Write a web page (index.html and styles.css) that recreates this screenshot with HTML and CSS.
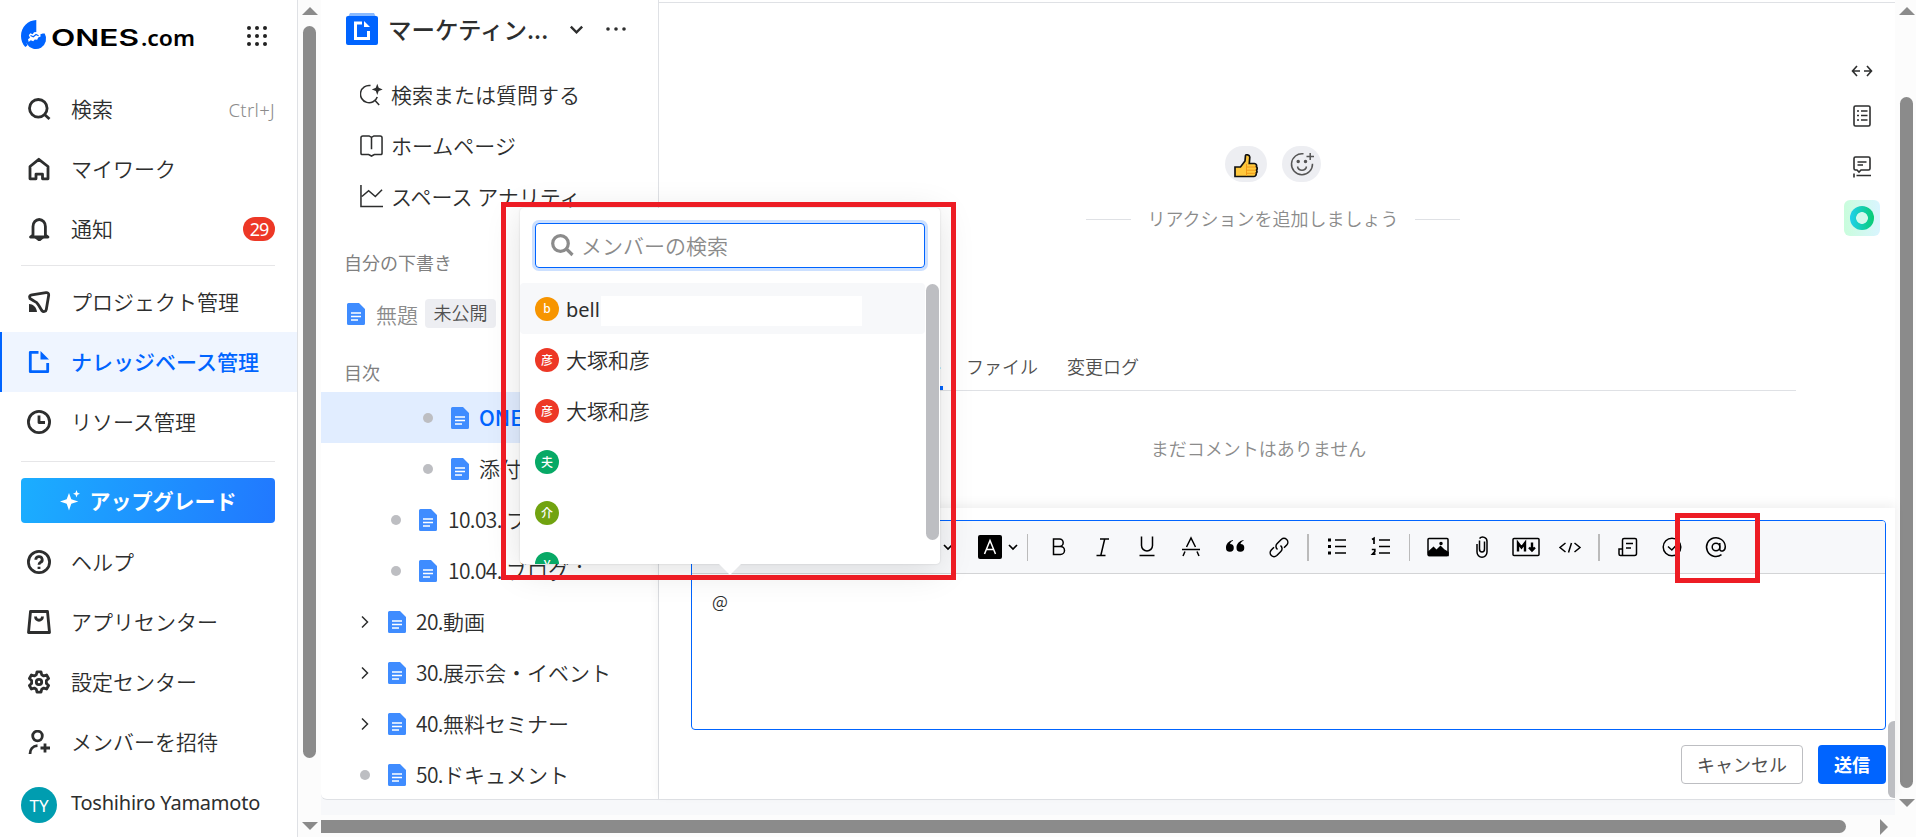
FILE: index.html
```html
<!DOCTYPE html>
<html lang="ja">
<head>
  <meta charset="UTF-8" />
  <meta name="viewport" content="width=device-width, initial-scale=1.0"/>
  <title>ONES.com - ナレッジベース管理</title>
  <link rel="stylesheet" href="styles.css">
</head>
<body>
  <svg class="defs" width="0" height="0">
    <symbol id="doc" viewBox="0 0 18 22">
      <path d="M1.500 0H12l6 6v14.500a1.500 1.500 0 0 1-1.500 1.500h-15A1.500 1.500 0 0 1 0 20.500v-19A1.500 1.500 0 0 1 1.500 0z" fill="#3f8cff"/>
      <path d="M4 10h10M4 13.500h10M4 17h7" stroke="#fff" stroke-width="1.500"/>
    </symbol>
    <symbol id="chev" viewBox="0 0 12 12">
      <path d="M2 4l4 4 4-4" fill="none" stroke="currentColor" stroke-width="1.700"/>
    </symbol>
    <symbol id="right" viewBox="0 0 10 14">
      <path d="M2 1.500L7.500 7 2 12.500" fill="none" stroke="currentColor" stroke-width="1.500"/>
    </symbol>
  </svg>

  <div class="app">
    <nav class="sidebar">
      <div class="brand">
        <svg width="176" height="34" viewBox="0 0 176 34">
          <path d="M15.300 1v12l-2.300.3-1.300 1.900-2.400-.9-1.500 2 1.200 2.400-2 1.500.6 2.200-2 1.600.7 2.600-2 1.500C1.500 25.200 0 21.200 0 17 0 8 7 1.200 15.300 1z" fill="#0064ff"/>
          <path d="M23.700 14.500A9.800 9.800 0 1 1 5.900 25l-.5-1.800 2.800-.8 1.600-1.200 2.400 1 1.600-1.600 2.400.2 1-2.200 2.400-1-.2-2.300 2.400-.8z" fill="#0064ff"/>
          <path d="M9.500 16.500l2.800 1.300 2.700-2.300 2.600 1.200" fill="none" stroke="#0064ff" stroke-width="1.200"/>
          <text class="logo-word" x="30" y="27" textLength="88" lengthAdjust="spacingAndGlyphs">ONES</text>
          <text class="logo-com" x="120" y="27" textLength="54" lengthAdjust="spacingAndGlyphs">.com</text>
        </svg>
        <svg class="apps" width="20" height="20" viewBox="0 0 20 20" fill="#222">
          <circle cx="2" cy="2" r="2"/><circle cx="10" cy="2" r="2"/><circle cx="18" cy="2" r="2"/>
          <circle cx="2" cy="10" r="2"/><circle cx="10" cy="10" r="2"/><circle cx="18" cy="10" r="2"/>
          <circle cx="2" cy="18" r="2"/><circle cx="10" cy="18" r="2"/><circle cx="18" cy="18" r="2"/>
        </svg>
      </div>

      <div class="nav-group">
        <div class="nav-item">
          <svg class="ico" viewBox="0 0 24 24"><circle cx="11.300" cy="11.300" r="8.800"/><path d="M17.500 17.500l5 4.500"/></svg>
          <span>検索</span><span class="shortcut">Ctrl+J</span>
        </div>
        <div class="nav-item">
          <svg class="ico" viewBox="0 0 24 24"><path d="M3 9.500L11.800 2.300l9.200 7.200v12.300h-5.500v-4.600h-6.500v4.600H3z"/></svg>
          <span>マイワーク</span>
        </div>
        <div class="nav-item">
          <svg class="ico" viewBox="0 0 24 24"><path d="M6 18v-8.500a6.200 7 0 0 1 12.400 0V18l2.600 2H3.500z"/><path d="M9 20.500h6.500l-3.200 2.500z" fill="#2d2e2e"/></svg>
          <span>通知</span><span class="count">29</span>
        </div>
      </div>
      <div class="rule"></div>
      <div class="nav-group">
        <div class="nav-item">
          <svg class="ico" viewBox="0 0 24 24"><path d="M3 8.500c-1.200-2.300.2-3.300 2-3.600L19 2.700c1.800-.2 3 .8 2.700 2.600l-2.400 14.200c-.4 2.300-3 2.700-4.500 1L11.500 15c-1.300-2.300-2-3-4.500-4z"/><path d="M2 14c4 0 7.500 3 8 8H2z" fill="#2d2e2e" stroke="none"/></svg>
          <span>プロジェクト管理</span>
        </div>
        <div class="nav-item active">
          <svg class="ico" viewBox="0 0 24 24"><path d="M11.500 2.300H3.300v19.400h17.400V13"/><path d="M13.500 1l8.500 8.500h-8.500z" fill="#0064ff" stroke="none"/></svg>
          <span>ナレッジベース管理</span>
        </div>
        <div class="nav-item">
          <svg class="ico" viewBox="0 0 24 24"><circle cx="12" cy="12" r="10.600"/><path d="M12 5.500v7h6"/></svg>
          <span>リソース管理</span>
        </div>
      </div>
      <div class="rule second"></div>
      <button class="upgrade">
        <svg width="20" height="21" viewBox="0 0 20 21" fill="#fff"><path d="M9 3l2.300 6.300 7 2.200-7 2.300L9 20.500l-2.300-6.700L0 11.500l6.700-2.200z"/><path d="M16.500 0l1 2.700 2.500 1-2.500 1-1 2.800-1-2.800-2.500-1 2.500-1z"/></svg>
        <span>アップグレード</span>
      </button>
      <div class="nav-group">
        <div class="nav-item">
          <svg class="ico" viewBox="0 0 24 24"><circle cx="12" cy="12" r="10.600"/><path d="M8.800 9.700a3.200 3 0 1 1 4.500 2.700c-1 .5-1.300.9-1.300 2.300M12 16.700v2.300"/></svg>
          <span>ヘルプ</span>
        </div>
        <div class="nav-item">
          <svg class="ico" viewBox="0 0 24 24"><path d="M3.500 1.500h17l2 21h-21z"/><path d="M8.500 6.500c0 5 7 5 7 0"/></svg>
          <span>アプリセンター</span>
        </div>
        <div class="nav-item">
          <svg class="ico" viewBox="0 0 24 24"><path d="M10 1.800h4l.7 3 2 1.100 2.900-.9 2 3.500-2.200 2.100v2.800l2.200 2.100-2 3.500-2.900-.9-2 1.100-.7 3h-4l-.7-3-2-1.100-2.900.9-2-3.500 2.200-2.100v-2.800L2.400 8.500l2-3.500 2.900.9 2-1.100z"/><circle cx="12" cy="12" r="2.700"/></svg>
          <span>設定センター</span>
        </div>
        <div class="nav-item">
          <svg class="ico" viewBox="0 0 24 24"><circle cx="10.500" cy="6" r="4.800"/><path d="M3 24c0-4 2.500-8 7.500-8.300M18 13.500v9M13.500 18H23"/></svg>
          <span>メンバーを招待</span>
        </div>
        <div class="nav-item user">
          <span class="user-avatar">TY</span>
          <span class="user-name">Toshihiro Yamamoto</span>
        </div>
      </div>
    </nav>

    <div class="vscroll left">
      <span class="arrow up"></span><span class="thumb"></span><span class="arrow down"></span>
    </div>

    <div class="frame">
      <div class="workspace">
        <aside class="tree">
          <div class="space-head">
            <svg width="32" height="32" viewBox="0 0 32 32"><path d="M4 0h24l2 4H2z" fill="#8abaff"/><rect y="3" width="32" height="29" rx="2" fill="#0064ff"/><path d="M16 10H9.500v15.500h13V18" fill="none" stroke="#fff" stroke-width="3"/><path d="M18 8l6 6h-6z" fill="#fff"/></svg>
            <span class="space-name">マーケティン...</span>
            <svg class="space-chev" width="17" height="17"><use href="#chev"/></svg>
            <svg width="20" height="4" viewBox="0 0 20 4" fill="#2d2e2e"><circle cx="2" cy="2" r="1.800"/><circle cx="10" cy="2" r="1.800"/><circle cx="18" cy="2" r="1.800"/></svg>
          </div>
          <div class="tree-link">
            <svg class="thin" viewBox="0 0 24 24"><path d="M11 2.700a9 9 0 1 0 7 11.800M15.500 18l4.500 5"/><path d="M18 .8l1.500 4.200 4.200 1.700-4.200 1.700L18 12.600l-1.500-4.200-4.200-1.700L16.500 5z" fill="#2d2e2e" stroke="none"/></svg>
            <span>検索または質問する</span>
          </div>
          <div class="tree-link">
            <svg class="thin" viewBox="0 0 24 24"><path d="M3 2h6.500l2.500 1.500L14.500 2H21q2 0 2 2v16q0 1.500-2 1.500h-6l-3 1.500-3-1.500H3q-2 0-2-1.500V4q0-2 2-2zM12 3.500V16"/></svg>
            <span>ホームページ</span>
          </div>
          <div class="tree-link">
            <svg class="thin" viewBox="0 0 24 24"><path d="M1 0v22.500h23M2 12l7-6 7 6 7-7"/></svg>
            <span>スペース アナリティ</span>
          </div>
          <div class="tree-label">自分の下書き</div>
          <div class="draft">
            <svg class="doc"><use href="#doc"/></svg>
            <span>無題</span>
            <span class="tag">未公開</span>
          </div>
          <div class="tree-label toc">目次</div>
          <div class="node lv3 current"><i class="dot"></i><svg class="doc"><use href="#doc"/></svg><span>ONES</span></div>
          <div class="node lv3"><i class="dot"></i><svg class="doc"><use href="#doc"/></svg><span>添付</span></div>
          <div class="node lv2"><i class="dot"></i><svg class="doc"><use href="#doc"/></svg><span class="num">10.03. </span><span>ブログ</span></div>
          <div class="node lv2"><i class="dot"></i><svg class="doc"><use href="#doc"/></svg><span class="num">10.04. </span><span>ブログ：</span></div>
          <div class="node"><svg class="exp"><use href="#right"/></svg><svg class="doc"><use href="#doc"/></svg><span class="num">20.</span><span>動画</span></div>
          <div class="node"><svg class="exp"><use href="#right"/></svg><svg class="doc"><use href="#doc"/></svg><span class="num">30.</span><span>展示会・イベント</span></div>
          <div class="node"><svg class="exp"><use href="#right"/></svg><svg class="doc"><use href="#doc"/></svg><span class="num">40.</span><span>無料セミナー</span></div>
          <div class="node"><i class="dot"></i><svg class="doc"><use href="#doc"/></svg><span class="num">50.</span><span>ドキュメント</span></div>
        </aside>

        <main class="page">
          <div class="reactions">
            <span class="pill like">
              <svg width="24" height="24" viewBox="0 0 24 24"><path d="M1 13h5.500L11 7l.5-5.500c.5-1.300 4-1 4.300 1.500L15.300 9.500h5c2 .3 2.700 1.700 2 3.200 1 1 1 2.500.2 3.400.7 1.200.4 2.500-.4 3.100.3 1.600-.4 3.300-2 3.300H1z" fill="#ffc83d" stroke="#111" stroke-width="1.700"/><path d="M12.500 10v12M12.500 13h9M12.500 16.200h9M12.500 19.300h9" stroke="#f09a1a" stroke-width="1" fill="none"/></svg>
            </span>
            <span class="pill add">
              <svg width="24" height="24" viewBox="0 0 24 24" fill="none" stroke="#555" stroke-width="1.500"><path d="M13.500 1.800a10.500 10.500 0 1 0 9 10M16.500 4.500h7.500M20.200 1v7M7.500 14.500c1 5 8 5 9 0"/><circle cx="8.200" cy="9.500" r="1" fill="#555"/><circle cx="15.500" cy="9.500" r="1" fill="#555"/></svg>
            </span>
          </div>
          <div class="reaction-hint"><span>リアクションを追加しましょう</span></div>
          <div class="tabs">
            <span class="tab on">コメント</span>
            <span class="tab">ファイル</span>
            <span class="tab">変更ログ</span>
          </div>
          <div class="empty">まだコメントはありません</div>

          <div class="composer">
            <div class="editor">
              <div class="toolbar">
                <span class="more">.</span>
                <svg class="mini" width="12" height="12"><use href="#chev"/></svg>
                <svg width="24" height="24" viewBox="0 0 24 24"><rect width="24" height="24" rx="2"/><path d="M6.500 19L12 5.500 17.500 19M8.500 14.500h7" fill="none" stroke="#fff" stroke-width="1.500"/></svg>
                <svg class="mini" width="12" height="12"><use href="#chev"/></svg>
                <i class="sep first"></i>
                <span class="tool"><svg viewBox="0 0 24 24"><path d="M6.500 4h6a3.700 3.700 0 0 1 0 7.400h-6zM6.500 11.400h7a4 4 0 0 1 0 8h-7z"/></svg></span>
                <span class="tool"><svg viewBox="0 0 24 24"><path d="M9 4h9M5.500 20.500h9M13.700 4L9.800 20.500"/></svg></span>
                <span class="tool"><svg viewBox="0 0 24 24"><path d="M6.500 1.500v9a5.500 5.500 0 0 0 11 0v-9M4.500 20.500h15"/></svg></span>
                <span class="tool"><svg viewBox="0 0 24 24"><path d="M7.500 12L12 3l4.500 9M3 14.500h18M6 16.500L4 21M18 16.500l2 4.500"/></svg></span>
                <span class="tool"><svg viewBox="0 0 24 24"><path d="M10 5C5.500 6 3 9 3 12.700A3.900 3.900 0 1 0 7 9c.3-1.500 1.500-2.500 3-3.200zM20.500 5c-4.500 1-7 4-7 7.700a3.900 3.900 0 1 0 4-3.700c.3-1.500 1.500-2.500 3-3.200z" fill="#000" stroke="none"/></svg></span>
                <span class="tool"><svg viewBox="0 0 24 24"><path d="M10.500 14.500c-2-1.700-2-4.300-.3-6l4-4c1.700-1.500 4-1.400 5.500 0s1.500 3.800 0 5.500l-2.700 2.700M13.500 10.500c2 1.700 2 4.300.3 6l-4 4c-1.700 1.500-4 1.400-5.500 0s-1.500-3.800 0-5.500L7 12.300"/></svg></span>
                <i class="sep wide"></i>
                <span class="tool"><svg viewBox="0 0 24 24"><path d="M10 5h11M10 11.500h11M10 18h11"/><path d="M3 3.500h3v3H3zM3 10h3v3H3zM3 16.500h3v3H3z" fill="#000" stroke="none"/></svg></span>
                <span class="tool"><svg viewBox="0 0 24 24"><path d="M10 5h11M10 11.500h11M10 18h11"/><path d="M3 4.500l2-1.200V9M2.800 14.500h3v2.200L3.500 19.200H6.500" stroke-width="1.700"/></svg></span>
                <i class="sep"></i>
                <span class="tool"><svg viewBox="0 0 24 24"><rect x="2" y="3.500" width="20" height="17" rx="1"/><path d="M2.500 17l5-4.500 3 3 4-4 3 3 4.500 3v3h-19z" fill="#000"/><circle cx="15" cy="8.500" r="1" fill="#000"/></svg></span>
                <span class="tool"><svg viewBox="0 0 24 24"><path d="M9.500 5.500V14q0 3 2.500 3t2.500-3V6.500M7 9v8a5 5.300 0 0 0 10 0V6.500a4.300 4.300 0 0 0-7.500-3"/></svg></span>
                <span class="tool md"><svg width="28" height="24" viewBox="0 0 28 24"><rect x="1" y="3.500" width="26" height="17" rx="1"/><path d="M6 16.500V8l3.500 4.500L13 8v8.500M20 7.500v7M17 12.500l3 3 3-3" stroke-width="2.400"/></svg></span>
                <span class="tool"><svg viewBox="0 0 24 24"><path d="M7.500 8L2 12.500 7.500 17M16.500 8l5.500 4.500-5.500 4.500M13.500 8l-3 9.500"/></svg></span>
                <i class="sep wide"></i>
                <span class="tool"><svg viewBox="0 0 24 24"><path d="M6.500 20.500V5q0-1.500 1.500-1.500h11q1.500 0 1.500 1.500v13.500q0 2-2 2h-14q-1.500 0-1.500-1.500v-5h3.500M10 8.500h7M10 13h5"/></svg></span>
                <span class="tool"><svg viewBox="0 0 24 24"><circle cx="12" cy="12" r="8.800"/><path d="M8 11.500l3.800 3.500 5.700-6"/></svg></span>
                <span class="tool"><svg viewBox="0 0 24 24"><circle cx="12" cy="12" r="3.800"/><path d="M15.800 8v6.500c.5 2.500 5.500 2.500 5.500-3A9.400 9.400 0 1 0 17.500 19.700"/></svg></span>
              </div>
              <div class="editor-body">@</div>
            </div>
            <div class="actions">
              <button class="btn">キャンセル</button>
              <button class="btn primary">送信</button>
            </div>
          </div>

          <div class="side-tools">
            <svg width="22" height="12" viewBox="0 0 22 12"><path d="M6 1L1.500 6 6 11M1.500 6H9M16 1l4.500 5L16 11M20.500 6H13"/></svg>
            <svg width="18" height="22" viewBox="0 0 18 22"><rect x="1" y="1" width="16" height="20" rx="1.500"/><path d="M4 6h2M8 6h6.500M4 10.500h2M8 10.500h6.500M4 15h2M8 15h6.500"/></svg>
            <svg width="18" height="22" viewBox="0 0 18 22"><path d="M2.500 1h13Q17 1 17 2.500v10q0 1.500-1.500 1.500H8l-2 2-2-2H2.500Q1 14 1 12.500v-10Q1 1 2.500 1zM4.500 6h9M4.500 9h5.500M1 17.500v4M3.500 19.500H18"/></svg>
            <span class="assistant"><i></i></span>
          </div>
          <div class="inner-thumb"></div>
        </main>
      </div>
      <div class="hscroll"><span class="hthumb"></span><span class="arrow next"></span></div>
    </div>

    <div class="vscroll outer">
      <span class="arrow up"></span><span class="thumb"></span><span class="arrow down"></span>
    </div>
  </div>

  <!-- member mention popup -->
  <div class="mention">
    <div class="mention-search">
      <svg width="23" height="23" viewBox="0 0 23 23" fill="none" stroke="#8b8b8b" stroke-width="3.200"><circle cx="9.500" cy="9.500" r="7.800"/><path d="M15.500 15l6 6"/></svg>
      <span>メンバーの検索</span>
    </div>
    <div class="mention-list">
      <div class="member hover"><span class="avatar orange">b</span>bell<span class="blank"></span></div>
      <div class="member"><span class="avatar red">彦</span><span>大塚和彦</span></div>
      <div class="member"><span class="avatar red">彦</span><span>大塚和彦</span></div>
      <div class="member"><span class="avatar green">夫</span></div>
      <div class="member"><span class="avatar olive">介</span></div>
      <div class="member"><span class="avatar green">Y</span></div>
      <span class="list-thumb"></span>
    </div>
  </div>
  <div class="mention-tip"></div>
  <div class="mark mark-popup"></div>
  <div class="mark mark-at"></div>
</body>
</html>
```
FILE: styles.css
```css
:root {
  --primary: #0064ff;
  --text: #2d2e2e;
  --muted: #8b8b8b;
  --line: #dfe1e5;
  --bar: #8b8b8b;
}

* {
  box-sizing: border-box;
}

body {
  margin: 0;
  height: 837px;
  overflow: hidden;
  position: relative;
  font-family: "Noto Sans CJK JP", "Noto Sans", sans-serif;
  font-weight: 350;
  font-size: 21px;
  color: var(--text);
  background: #fff;
}

button {
  font-family: inherit;
}

.defs {
  position: absolute;
}

.app {
  display: flex;
  height: 837px;
  white-space: nowrap;
}

/* left navigation */
.sidebar {
  width: 298px;
  flex: none;
  border-right: 1px solid var(--line);
}

.brand {
  height: 79px;
  padding: 19px 30px 0 21px;
  display: flex;
  justify-content: space-between;
}

.apps {
  margin-top: 7px;
}

.logo-word {
  font: 600 23px Inter, sans-serif;
}

.logo-com {
  font: 600 21px "Noto Sans", sans-serif;
}

.nav-item {
  height: 60px;
  padding: 0 22px 0 27px;
  display: flex;
  align-items: center;
}

.nav-item > span:not([class]),
.tree-link span,
.mention-search span,
.member > span:not([class]),
.reaction-hint span {
  padding-bottom: 2px;
}

.nav-item.active {
  background: #eff5ff;
  border-left: 2px solid var(--primary);
  padding-left: 25px;
  color: var(--primary);
  font-weight: 500;
}

.ico {
  width: 24px;
  height: 24px;
  margin-right: 20px;
  flex: none;
  fill: none;
  stroke: var(--text);
  stroke-width: 2.800;
  stroke-linejoin: round;
}

.active .ico {
  stroke: var(--primary);
}

.shortcut {
  margin-left: auto;
  font: 300 18.500px "Noto Sans", sans-serif;
  letter-spacing: 0.300px;
  color: var(--muted);
}

.count {
  margin-left: auto;
  width: 32px;
  height: 24px;
  border-radius: 12px;
  background: #ed3826;
  color: #fff;
  font: 400 18px/24px "Noto Sans", sans-serif;
  letter-spacing: -1px;
  text-align: center;
}

.rule {
  height: 1px;
  margin: 6px 22px 6px 21px;
  background: #e6e6e8;
}

.rule.second {
  margin: 9px 22px 16px 21px;
}

.upgrade {
  display: flex;
  align-items: center;
  justify-content: center;
  gap: 10px;
  width: 254px;
  height: 45px;
  margin: 0 0 9px 21px;
  border: 0;
  border-radius: 4px;
  background: linear-gradient(100deg, #1baeff, #2178ff);
  color: #fff;
  font-size: 21px;
  font-weight: 700;
}

.upgrade span {
  padding-bottom: 2px;
}

.nav-item.user {
  height: 65px;
  padding-left: 21px;
}

.user-avatar {
  width: 36px;
  height: 36px;
  margin-right: 14px;
  border-radius: 50%;
  background: #009db0;
  color: #fff;
  font: 400 17px/37px "Noto Sans", sans-serif;
  text-align: center;
}

.user-name {
  font-family: "Noto Sans", sans-serif;
  font-weight: 400;
  font-size: 20px;
  letter-spacing: -0.230px;
  padding-bottom: 4px;
}

/* scrollbars */
.vscroll {
  flex: none;
  display: flex;
  flex-direction: column;
  align-items: center;
  background: #fcfcfc;
}

.vscroll.left {
  width: 23px;
  padding: 7px 0 0;
}

.vscroll.outer {
  width: 21px;
  padding: 7px 0 0 2px;
}

.thumb {
  width: 13px;
  border-radius: 7px;
  background: var(--bar);
}

.left .thumb {
  height: 732px;
  margin: 11px 0 64px;
}

.outer .thumb {
  height: 691px;
  margin: 82px 0 11px;
}

.arrow {
  width: 0;
  height: 0;
  border: 8px solid transparent;
}

.arrow.up {
  border-top: 0;
  border-bottom-color: var(--bar);
}

.arrow.down {
  border-bottom: 0;
  border-top-color: var(--bar);
}

.arrow.next {
  border-right: 0;
  border-left-color: var(--bar);
}

.hscroll {
  height: 22px;
  background: #fcfcfc;
  display: flex;
  align-items: center;
  justify-content: space-between;
  padding: 1px 7px 0 0;
}

.hthumb {
  width: 1525px;
  height: 13px;
  border-radius: 0 7px 7px 0;
  background: var(--bar);
}

/* workspace */
.frame {
  flex: 1;
  min-width: 0;
  background: #f7f8fa;
}

.workspace {
  display: flex;
  height: 800px;
  margin-bottom: 15px;
  background: #fff;
  border-bottom: 1px solid var(--line);
  border-bottom-left-radius: 6px;
}

.tree {
  width: 338px;
  flex: none;
  overflow: hidden;
  border-right: 1px solid var(--line);
}

.space-head {
  height: 69px;
  padding: 0 0 11px 25px;
  display: flex;
  align-items: center;
}

.space-name {
  width: 165px;
  margin: 0 15px 0 10px;
  font-size: 23.500px;
  font-weight: 500;
}

.space-chev {
  margin-right: 21px;
}

.tree-link {
  height: 51px;
  padding-left: 39px;
  display: flex;
  align-items: center;
  gap: 8px;
}

.thin {
  width: 23px;
  height: 23px;
  fill: none;
  stroke: var(--text);
  stroke-width: 1.600;
}

.tree-label {
  margin-top: 26px;
  padding-left: 23px;
  font-size: 18px;
  line-height: 28px;
  font-weight: 400;
  color: #808080;
}

.tree-label.toc {
  margin: 19px 0 6px;
}

.draft {
  height: 51px;
  margin-top: 12px;
  padding-left: 26px;
  display: flex;
  align-items: center;
  color: var(--muted);
}

.doc {
  width: 18px;
  height: 22px;
  margin-right: 11px;
  flex: none;
}

.tag {
  height: 29px;
  margin-left: 7px;
  padding: 0 8.500px;
  border-radius: 4px;
  background: #edeef2;
  color: #505050;
  font-size: 18px;
  line-height: 27px;
}

.node {
  height: 51px;
  padding-left: 39px;
  display: flex;
  align-items: center;
}

.node span {
  padding-bottom: 1px;
}

.node .doc {
  margin-right: 10px;
}

.node.lv2 {
  padding-left: 70px;
}

.node.lv2 .doc {
  margin-right: 11px;
}

.node.lv3 {
  padding-left: 102px;
}

.node.current {
  background: #e1edff;
  color: var(--primary);
  font-weight: 500;
}

.num {
  letter-spacing: -0.600px;
  white-space: pre;
}

.dot {
  width: 10px;
  height: 10px;
  margin-right: 18px;
  border-radius: 50%;
  background: #bdbec2;
}

.exp {
  width: 10px;
  height: 14px;
  margin-right: 18px;
}

/* page content */
.page {
  position: relative;
  flex: 1;
  min-width: 0;
  margin-top: 2px;
  border-top: 1px solid var(--line);
  display: flex;
  flex-direction: column;
}

.reactions {
  margin: 143px 0 0 566px;
  display: flex;
  gap: 15px;
}

.pill {
  width: 42px;
  height: 36px;
  border-radius: 18px;
  background: #edeef2;
  display: flex;
  align-items: center;
  justify-content: center;
}

.pill.like {
  padding-top: 3px;
}

.pill.add {
  width: 39px;
}

.reaction-hint {
  display: flex;
  align-items: center;
  justify-content: center;
  gap: 16px;
  height: 30px;
  margin: 22px 8px 0 0;
  font-size: 18px;
  color: var(--muted);
}

.reaction-hint::before,
.reaction-hint::after {
  content: "";
  width: 45px;
  height: 1px;
  background: var(--line);
}

.tabs {
  display: flex;
  gap: 29px;
  height: 49px;
  margin: 108px 99px 0 62px;
  padding-left: 150px;
  border-bottom: 1px solid var(--line);
  font-size: 18px;
  line-height: 48px;
  color: #505050;
}

.tab.on {
  height: 48px;
  border-bottom: 4px solid var(--primary);
  margin-right: -6px;
  color: var(--primary);
}

.empty {
  margin: 43px 99px 0 62px;
  font-size: 18px;
  line-height: 28px;
  text-align: center;
  color: var(--muted);
}

.composer {
  margin-top: auto;
  height: 291px;
  padding: 12px 9px 15px 32px;
  box-shadow: 0 -4px 10px rgba(0, 0, 0, 0.060);
}

.editor {
  height: 210px;
  border: 1px solid var(--primary);
  border-radius: 4px;
  overflow: hidden;
}

.toolbar {
  height: 53px;
  padding: 0 0 0 236px;
  background: #f7f8fa;
  border-bottom: 1px solid #d3d4d6;
  display: flex;
  align-items: center;
  color: #000;
}

.more {
  width: 16px;
}

.mini {
  margin: 0 5px;
}

.toolbar > .mini:nth-child(2) {
  margin: 0 24px 0 -2px;
}

.sep {
  width: 1px;
  height: 27px;
  margin: 0 6px;
  background: #bbb;
}

.sep.first {
  margin: 0 9px 0 3px;
}

.sep.wide {
  width: 2px;
}

.tool {
  width: 44px;
  display: flex;
  justify-content: center;
}

.tool svg {
  width: 24px;
  height: 24px;
  fill: none;
  stroke: #000;
  stroke-width: 1.500;
}

.tool.md svg {
  width: 28px;
}

.editor-body {
  padding: 14px 20px;
  font-size: 17px;
}

.actions {
  display: flex;
  justify-content: flex-end;
  gap: 15px;
  margin-top: 15px;
}

.btn {
  height: 39px;
  width: 122px;
  padding: 0 0 2px;
  border: 1px solid #bdbec2;
  border-radius: 4px;
  background: #fff;
  color: #505050;
  font-size: 18px;
}

.btn.primary {
  width: 68px;
  border: 0;
  background: var(--primary);
  color: #fff;
  font-weight: 700;
}

.side-tools {
  position: absolute;
  top: 62px;
  right: 15px;
  width: 36px;
  display: flex;
  flex-direction: column;
  align-items: center;
}

.side-tools svg {
  fill: none;
  stroke: var(--text);
  stroke-width: 1.600;
  margin-bottom: 28px;
}

.side-tools svg:nth-child(2) {
  margin-bottom: 29px;
}

.side-tools svg:nth-child(3) {
  margin-bottom: 22px;
}

.assistant {
  width: 36px;
  height: 36px;
  border-radius: 6px;
  background: linear-gradient(90deg, #c9fddc, #d9f5ff);
  display: flex;
  align-items: center;
  justify-content: center;
}

.assistant i {
  width: 24px;
  height: 24px;
  border-radius: 50%;
  background: radial-gradient(circle, #d2f9ec 5.500px, transparent 6.200px), linear-gradient(90deg, #1fd0ee, #08cc72);
}

.inner-thumb {
  position: absolute;
  right: 0;
  bottom: 1px;
  width: 7px;
  height: 77px;
  border-radius: 6px 0 0 6px;
  background: #bdbec2;
}

/* mention popup */
.mention {
  position: absolute;
  left: 520px;
  top: 208px;
  width: 420px;
  height: 356px;
  padding-top: 15px;
  border-radius: 4px;
  background: #fff;
  box-shadow: 0 6px 36px rgba(0, 0, 0, 0.120), 0 0 2px rgba(0, 0, 0, 0.150);
}

.mention-search {
  width: 390px;
  height: 45px;
  margin: 0 15px 15px;
  padding-left: 15px;
  display: flex;
  align-items: center;
  gap: 7px;
  border: 1px solid var(--primary);
  border-radius: 4px;
  box-shadow: 0 0 0 3px #cce0ff;
  color: var(--muted);
}

.mention-list {
  position: relative;
  height: 281px;
  overflow: hidden;
}

.member {
  width: 405px;
  height: 51px;
  padding-left: 15px;
  display: flex;
  align-items: center;
}

.member.hover {
  background: #f7f8fa;
  border-radius: 4px;
  padding-top: 1px;
  font-family: "Noto Sans", sans-serif;
  font-weight: 400;
  font-size: 20px;
}

.blank {
  width: 261px;
  height: 30px;
  margin: 3px 0 0 1px;
  background: #fff;
}

.avatar {
  width: 24px;
  height: 24px;
  margin-right: 7px;
  border-radius: 50%;
  color: #fff;
  font-size: 12px;
  font-weight: 500;
  line-height: 24px;
  text-align: center;
}

.orange { background: #f79500; }
.red { background: #ed3826; }
.green { background: #07a966; }
.olive { background: #71a310; }

.list-thumb {
  position: absolute;
  right: 1px;
  top: 1px;
  width: 13px;
  height: 256px;
  border-radius: 7px;
  background: #bdbec2;
}

.mention-tip {
  position: absolute;
  left: 719px;
  top: 564px;
  border: 11px solid transparent;
  border-top-color: #fff;
  border-bottom: 0;
}

/* highlight boxes */
.mark {
  position: absolute;
  border: 5px solid #ed1c24;
}

.mark-popup {
  left: 501px;
  top: 202px;
  width: 455px;
  height: 378px;
}

.mark-at {
  left: 1675px;
  top: 513px;
  width: 85px;
  height: 70px;
}
```
